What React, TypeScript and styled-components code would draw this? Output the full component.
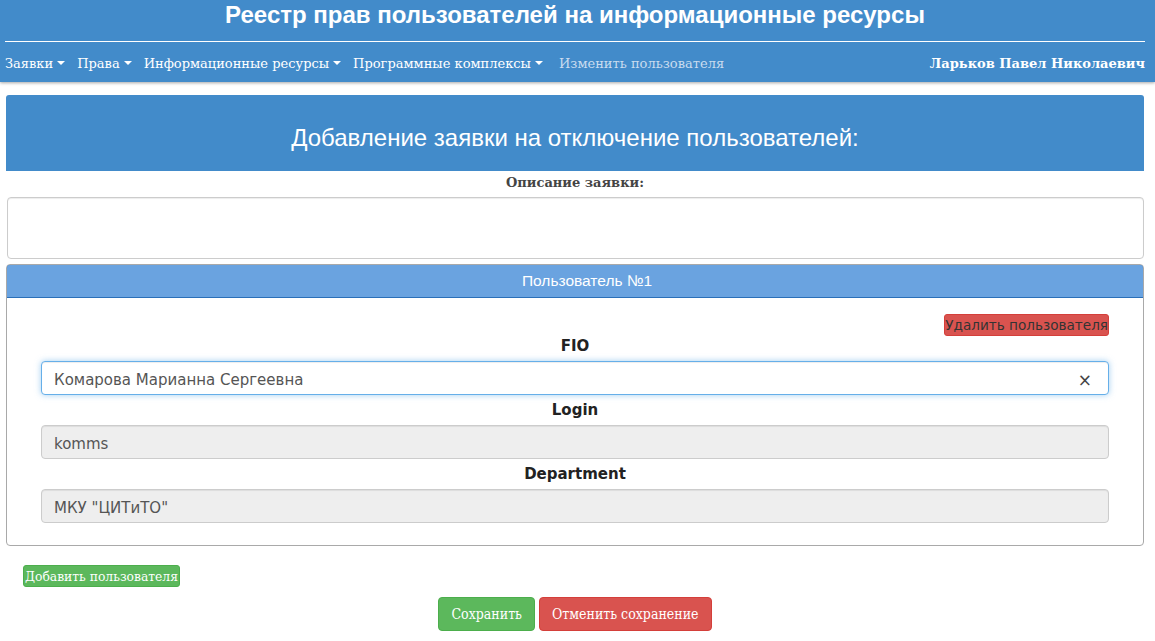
import React from "react";
import styled, { createGlobalStyle } from "styled-components";

const Global = createGlobalStyle`
  html, body { margin: 0; padding: 0; background: #fff; }
  body { font-family: "DejaVu Serif", serif; }
  * { box-sizing: border-box; }
`;

const Navbar = styled.header`
  background: #428bca;
  padding: 3px 10px 0 5px;
  height: 82px;
  box-shadow: 0 1px 3px rgba(0, 0, 0, 0.35);
`;

const SiteTitle = styled.h1`
  margin: 0;
  height: 24px;
  font: bold 24px/24px "Liberation Sans", Arial, sans-serif;
  color: #fff;
  text-align: center;
`;

const Rule = styled.div`
  margin: 14px 0 0 0;
  border-top: 1px solid #fff;
`;

const NavRow = styled.nav`
  display: flex;
  align-items: center;
  height: 42px;
`;

const NavItem = styled.a<{ $muted?: boolean }>`
  font: 13px "DejaVu Serif", serif;
  color: ${(p) => (p.$muted ? "#c9dcef" : "#fff")};
  margin-right: 12px;
  display: inline-flex;
  align-items: center;
  white-space: nowrap;
`;

const MutedItem = styled(NavItem)`
  margin-left: 4px;
`;

const Caret = styled.span`
  display: inline-block;
  margin-left: 4px;
  width: 0;
  height: 0;
  border-top: 4px solid #fff;
  border-left: 4px solid transparent;
  border-right: 4px solid transparent;
`;

const UserName = styled.span`
  margin-left: auto;
  font: bold 13px "DejaVu Serif", serif;
  color: #fff;
  white-space: nowrap;
`;

const Main = styled.main`
  padding: 13px 11px 0 6px;
`;

const CardHeader = styled.div`
  background: #428bca;
  border-radius: 3px 3px 0 0;
  height: 76px;
  display: flex;
  align-items: center;
  justify-content: center;
  padding-top: 9px;
  font: 24px "Liberation Sans", Arial, sans-serif;
  color: #fff;
`;

const DescLabel = styled.div`
  text-align: center;
  font: bold 13px/24px "DejaVu Serif", serif;
  color: #444;
`;

const TextArea = styled.div`
  margin: 2px 0 0 1px;
  height: 62px;
  border: 1px solid #ccc;
  border-radius: 4px;
  box-shadow: inset 0 1px 1px rgba(0, 0, 0, 0.075);
`;

const Panel = styled.section`
  margin-top: 5px;
  border: 1px solid #a9a9a9;
  border-radius: 4px;
  height: 282px;
  overflow: hidden;
`;

const PanelHeading = styled.div`
  background: #6aa3e0;
  border: 1px solid #2a6fb8;
  margin: -1px -1px 0 -1px;
  border-radius: 4px 4px 0 0;
  height: 34px;
  display: flex;
  align-items: center;
  justify-content: center;
  padding-left: 24px;
  font: 15.5px "Liberation Sans", Arial, sans-serif;
  color: #fff;
`;

const PanelBody = styled.div`
  padding: 16px 34px 0 34px;
  display: flex;
  flex-direction: column;
`;

const DeleteButton = styled.button`
  align-self: flex-end;
  background: #d9534f;
  border: 1px solid #d43f3a;
  border-radius: 3px;
  color: #333;
  font: 13.6px/20px "DejaVu Sans", Verdana, sans-serif;
  padding: 0;
  height: 22px;
  cursor: pointer;
`;

const FieldLabel = styled.label`
  display: block;
  text-align: center;
  font: bold 15px/20px "DejaVu Sans", Verdana, sans-serif;
  color: #222;
  margin: 0 0 5px;
`;

const Field = styled.div<{ $focused?: boolean }>`
  height: 34px;
  border-radius: 4px;
  border: 1px solid ${(p) => (p.$focused ? "#66afe9" : "#ccc")};
  background: ${(p) => (p.$focused ? "#fff" : "#eee")};
  box-shadow: ${(p) =>
    p.$focused
      ? "inset 0 1px 1px rgba(0,0,0,.075), 0 0 6px rgba(102,175,233,.6)"
      : "inset 0 1px 1px rgba(0,0,0,.075)"};
  display: flex;
  align-items: center;
  padding: 3px 16px 0 12px;
  font: 15px "DejaVu Sans", Verdana, sans-serif;
  color: #555;
  margin-bottom: 5px;
`;

const FieldValue = styled.span`
  flex: 1;
`;

const Clear = styled.span`
  font: 17px "DejaVu Sans", sans-serif;
  color: #444;
`;

const AddRow = styled.div`
  padding: 19px 0 0 17px;
`;

const SmallButton = styled.button`
  background: #5cb85c;
  border: 1px solid #4cae4c;
  border-radius: 3px;
  color: #fff;
  font: 13.7px/20px "DejaVu Serif", serif;
  font-stretch: condensed;
  padding: 0 1px;
  height: 22px;
  cursor: pointer;
`;

const Actions = styled.div`
  display: flex;
  justify-content: center;
  gap: 4px;
  padding-top: 10px;
`;

const ActionButton = styled.button<{ $variant: "success" | "danger" }>`
  background: ${(p) => (p.$variant === "success" ? "#5cb85c" : "#d9534f")};
  border: 1px solid ${(p) => (p.$variant === "success" ? "#4cae4c" : "#d43f3a")};
  border-radius: 4px;
  color: #fff;
  font: 14px "DejaVu Serif", serif;
  font-stretch: condensed;
  height: 34px;
  padding: 0 12px;
  cursor: pointer;
`;

const navItems = ["Заявки", "Права", "Информационные ресурсы", "Программные комплексы"];

export default function App() {
  return (
    <>
      <Global />
      <Navbar>
        <SiteTitle>Реестр прав пользователей на информационные ресурсы</SiteTitle>
        <Rule />
        <NavRow>
          {navItems.map((label) => (
            <NavItem key={label}>
              {label}
              <Caret />
            </NavItem>
          ))}
          <MutedItem $muted>Изменить пользователя</MutedItem>
          <UserName>Ларьков Павел Николаевич</UserName>
        </NavRow>
      </Navbar>
      <Main>
        <CardHeader>Добавление заявки на отключение пользователей:</CardHeader>
        <DescLabel>Описание заявки:</DescLabel>
        <TextArea />
        <Panel>
          <PanelHeading>Пользователь №1</PanelHeading>
          <PanelBody>
            <DeleteButton>Удалить пользователя</DeleteButton>
            <FieldLabel>FIO</FieldLabel>
            <Field $focused>
              <FieldValue>Комарова Марианна Сергеевна</FieldValue>
              <Clear>×</Clear>
            </Field>
            <FieldLabel>Login</FieldLabel>
            <Field>
              <FieldValue>komms</FieldValue>
            </Field>
            <FieldLabel>Department</FieldLabel>
            <Field>
              <FieldValue>МКУ "ЦИТиТО"</FieldValue>
            </Field>
          </PanelBody>
        </Panel>
        <AddRow>
          <SmallButton>Добавить пользователя</SmallButton>
        </AddRow>
        <Actions>
          <ActionButton $variant="success">Сохранить</ActionButton>
          <ActionButton $variant="danger">Отменить сохранение</ActionButton>
        </Actions>
      </Main>
    </>
  );
}
